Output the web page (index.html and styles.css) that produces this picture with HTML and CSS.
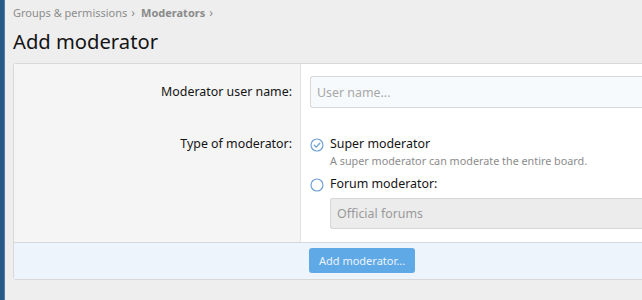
FILE: index.html
```html
<!DOCTYPE html>
<html>
<head>
<meta charset="utf-8">
<link rel="stylesheet" href="styles.css">
</head>
<body>
<div class="side"></div>
<main class="main">
  <nav class="crumbs">
    <span class="crumb">Groups &amp; permissions</span><span class="sep">›</span>
    <span class="crumb strong">Moderators</span><span class="sep">›</span>
  </nav>
  <h1 class="title">Add moderator</h1>
  <form class="panel">
    <div class="body">
      <div class="row">
        <div class="label lbl-input">Moderator user name:</div>
        <div class="ctrl ctrl-input">
          <input class="input" type="text" placeholder="User name...">
        </div>
      </div>
      <div class="row">
        <div class="label lbl-radio">Type of moderator:</div>
        <div class="ctrl ctrl-radio">
          <div class="opt">
            <svg class="radio" viewBox="0 0 14 14" width="14" height="14"><circle cx="7" cy="7" r="6" fill="none" stroke="#6f9fd6" stroke-width="1.2"/><path d="M4.3 7.2 L6.3 9.1 L9.8 5.2" fill="none" stroke="#6f9fd6" stroke-width="1.3" stroke-linecap="round" stroke-linejoin="round"/></svg>
            <div class="opt-text">
              <div class="opt-label">Super moderator</div>
              <div class="hint">A super moderator can moderate the entire board.</div>
            </div>
          </div>
          <div class="opt">
            <svg class="radio" viewBox="0 0 14 14" width="14" height="14"><circle cx="7" cy="7" r="6" fill="none" stroke="#6f9fd6" stroke-width="1.2"/></svg>
            <div class="opt-text">
              <div class="opt-label">Forum moderator:</div>
              <div class="select">Official forums</div>
            </div>
          </div>
        </div>
      </div>
    </div>
    <div class="footer">
      <div class="footer-spacer"></div>
      <div class="footer-ctrl"><button class="btn" type="button">Add moderator...</button></div>
    </div>
  </form>
</main>
</body>
</html>
```
FILE: styles.css
```css
html, body {
  margin: 0;
  padding: 0;
  height: 100%;
  overflow: hidden;
}
body {
  display: flex;
  background: #eeeeee;
  font-family: "Noto Sans", "Open Sans", sans-serif;
  color: #141414;
}
.side {
  width: 4px;
  flex: none;
  background: #275a86;
  border-right: 1px solid #4f7ca3;
}
.main {
  flex: 1;
  padding: 4px 0 0 8px;
  min-width: 0;
}
.crumbs {
  font-size: 11px;
  color: #8c8c8c;
  height: 17px;
  line-height: 17px;
  display: flex;
  gap: 4px;
  align-items: center;
}
.crumb.strong { font-weight: bold; color: #8a8a8a; }
.sep { margin-right: 2px; font-size: 12px; }
.title {
  margin: 5px 0 0 0;
  font-size: 20.2px;
  font-weight: normal;
  line-height: 30px;
  color: #141414;
}
.panel {
  margin-top: 7px;
  margin-right: -4px;
  border: 1px solid #d8d8d8;
  border-radius: 3px 0 0 3px;
  background: #fff;
}
.body { display: flex; flex-direction: column; }
.row { display: flex; }
.label {
  width: 278px;
  flex: none;
  background: #f5f5f5;
  border-right: 1px solid #e2e2e2;
  text-align: right;
  padding-right: 8px;
  font-size: 12.4px;
  color: #141414;
}
.lbl-input { padding-top: 19px; }
.lbl-radio { padding-top: 9px; }
.ctrl { flex: 1; padding-left: 9px; }
.ctrl-input { padding-top: 12px; padding-bottom: 18px; }
.input {
  display: block;
  box-sizing: border-box;
  width: 100%;
  height: 32px;
  border: 1px solid #d8d8d8;
  border-right: none;
  border-radius: 3px 0 0 3px;
  background: #f7fafd;
  font: inherit;
  font-size: 12.4px;
  padding: 0 6px;
  outline: none;
}
.input::placeholder { color: #a8a8a8; }
.ctrl-radio { padding-top: 9px; padding-bottom: 13px; }
.opt { display: flex; gap: 6px; }
.opt + .opt { margin-top: 6px; }
.radio { flex: none; margin-top: 3px; }
.opt-text { flex: 1; }
.opt-label { font-size: 12.4px; line-height: 18px; }
.hint { font-size: 10.8px; color: #8c8c8c; line-height: 16px; }
.select {
  margin-top: 5px;
  height: 31px;
  box-sizing: border-box;
  border: 1px solid #d6d6d6;
  border-right: none;
  border-radius: 3px 0 0 3px;
  background: #ececec;
  color: #9a9a9a;
  font-size: 12.4px;
  line-height: 29px;
  padding-left: 6px;
}
.footer {
  display: flex;
  border-top: 1px solid #d8d8d8;
  background: #edf4fc;
  height: 36px;
}
.footer-spacer { width: 287px; flex: none; }
.footer-ctrl { padding: 5px 0 0 8px; }
.btn {
  height: 25px;
  border: none;
  border-radius: 3px;
  background: #5ea9e6;
  color: #eef5fc;
  font: inherit;
  font-size: 11px;
  padding: 0 10px;
}
```
